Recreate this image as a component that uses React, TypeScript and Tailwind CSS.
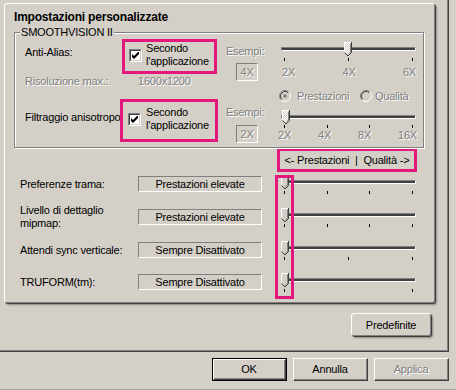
import React from "react";

function Dis({ children, className = "" }: { children: React.ReactNode; className?: string }) {
  return <span className={`text-[#808080] [text-shadow:1px_1px_0_#ffffff] ${className}`}>{children}</span>;
}

function Checkbox() {
  return (
    <div className="w-[13px] h-[13px] flex-none border-t border-l border-[#808080] border-r border-b border-r-white border-b-white">
      <div className="w-full h-full border-t border-l border-[#404040] border-r border-b border-r-[#d4d0c8] border-b-[#d4d0c8] bg-white flex items-center justify-center">
        <svg width="7" height="7" viewBox="0 0 7 7">
          <polygon points="0,2 2,4 7,-1 7,2 2,7 0,5" fill="#000" />
        </svg>
      </div>
    </div>
  );
}

function Radio({ checked }: { checked?: boolean }) {
  return (
    <svg width="12" height="12" viewBox="0 0 12 12" className="flex-none">
      <circle cx="6" cy="6" r="5.5" fill="#d4d0c8" />
      <path d="M2.11 9.89 A5.5 5.5 0 0 1 9.89 2.11" stroke="#808080" fill="none" />
      <path d="M9.89 2.11 A5.5 5.5 0 0 1 2.11 9.89" stroke="#ffffff" fill="none" />
      <path d="M2.82 9.18 A4.5 4.5 0 0 1 9.18 2.82" stroke="#404040" fill="none" />
      {checked && <circle cx="6" cy="6" r="1.8" fill="#808080" />}
    </svg>
  );
}

function Thumb({ hatched }: { hatched?: boolean }) {
  return (
    <svg width="8" height="15" viewBox="0 0 8 15">
      <defs>
        <pattern id="hatchpat" width="2" height="2" patternUnits="userSpaceOnUse">
          <rect width="2" height="2" fill="#d4d0c8" />
          <rect width="1" height="1" fill="#ffffff" />
          <rect x="1" y="1" width="1" height="1" fill="#ffffff" />
        </pattern>
      </defs>
      <path d="M0.5 0.5 H7.5 V10.5 L4 14 L0.5 10.5 Z" fill={hatched ? "url(#hatchpat)" : "#d4d0c8"} />
      <path d="M0.5 10.5 V0.5 H7" stroke="#ffffff" fill="none" />
      <path d="M7.5 0 V10.5 L4 14 L0.5 10.5" stroke="#404040" fill="none" />
      <path d="M6.5 1.5 V10 L4 12.5" stroke="#808080" fill="none" />
    </svg>
  );
}

function Slider({
  thumbLeft = 0,
  ticks,
  hatched = false,
  tickMt = "mt-[1px]",
  children,
}: {
  thumbLeft?: number;
  ticks: number;
  hatched?: boolean;
  tickMt?: string;
  children?: React.ReactNode;
}) {
  return (
    <div className="relative w-[135px] flex-none">
      <div className="h-[15px] pt-[5px]">
        <div className="h-[4px] border-t border-l border-[#808080] border-b border-r border-b-white border-r-white bg-[#404040]" />
      </div>
      <div className={`${tickMt} h-[3px] px-[3px] flex justify-between`}>
        {Array.from({ length: ticks }).map((_, i) => (
          <div key={i} className="w-px h-full bg-black" />
        ))}
      </div>
      {children}
      <div className="absolute top-0" style={{ left: thumbLeft }}>
        <Thumb hatched={hatched} />
      </div>
    </div>
  );
}

function SmallBox({ children }: { children: React.ReactNode }) {
  return (
    <div className="w-[22px] h-[18px] ml-[10px] border-t border-l border-[#808080] border-b border-r border-b-white border-r-white flex items-center justify-center">
      <Dis>{children}</Dis>
    </div>
  );
}

function ValueBox({ children }: { children: React.ReactNode }) {
  return (
    <div className="w-[124px] h-[16px] flex-none border-t border-l border-[#808080] border-b border-r border-b-white border-r-white flex items-center justify-center leading-[14px]">
      {children}
    </div>
  );
}

function ClassicButton({ children, isDefault, disabled }: { children: React.ReactNode; isDefault?: boolean; disabled?: boolean }) {
  const inner = (
    <div className="w-full h-full border-t border-l border-white border-r border-b border-r-[#404040] border-b-[#404040]">
      <div className="w-full h-full border-r border-b border-r-[#808080] border-b-[#808080] flex items-center justify-center">
        {disabled ? <Dis>{children}</Dis> : <span>{children}</span>}
      </div>
    </div>
  );
  return (
    <div className={isDefault ? "w-[75px] h-[23px] border border-black" : "w-[75px] h-[23px]"}>{inner}</div>
  );
}

function LowerRow({ label, value, ticks, twoLine }: { label: React.ReactNode; value: string; ticks: number; twoLine?: boolean }) {
  return (
    <div className="flex items-start h-[20px]">
      <div className="flex items-center h-[16px] mt-[1px]">
        <div className={`w-[124px] pl-[6px] ${twoLine ? "leading-[13px]" : "leading-[14px]"}`}>{label}</div>
        <ValueBox>{value}</ValueBox>
      </div>
      <div className="ml-[19px]">
        <Slider ticks={ticks} />
      </div>
    </div>
  );
}

export default function App() {
  const pink = "border-[3px] border-[#e2187c]";
  return (
    <div className="w-[456px] h-[390px] bg-[#d4d0c8] overflow-hidden font-['Liberation_Sans',Arial,sans-serif] text-[11px] leading-[14px] tracking-[-0.2px] text-black border-b border-[#a9a69f]">
      {/* tab page frame */}
      <div className="w-[449px] h-[352px] border-r border-b border-[#404040] shadow-[inset_-1px_-1px_0_#808080] pt-[3px] pl-[4px] flex flex-col">
        {/* panel */}
        <div className="w-[431px] h-[300px] rounded-[3px] border border-[#808080] border-t-white border-l-white shadow-[1px_1px_0_#404040,2px_2px_2px_#8a8780] pl-[9px] pr-[10px] flex flex-col">
          <div className="mt-[6px] h-[14px] font-bold text-[12px] leading-[14px]">Impostazioni personalizzate</div>

          {/* group box */}
          <div className="relative mt-[8px] h-[116px] border border-[#808080] shadow-[inset_1px_1px_0_#ffffff,1px_1px_0_#ffffff] flex">
            <div className="absolute left-[5px] -top-[8px] px-[1px] bg-[#d4d0c8] leading-[14px]">SMOOTHVISION II</div>

            {/* left column */}
            <div className="w-[205px] flex-none flex flex-col">
              <div className="mt-[6px] flex items-start">
                <div className="w-[107px] pl-[10px] mt-[6px]">Anti-Alias:</div>
                <div className={`w-[95px] h-[35px] ${pink} flex items-center pl-[4px] gap-[4px] pb-[3px]`}>
                  <Checkbox />
                  <div className="leading-[13px]">
                    <div>Secondo</div>
                    <div>l'applicazione</div>
                  </div>
                </div>
              </div>
              <div className="flex h-[14px]">
                <div className="w-[123px] pl-[10px]">
                  <Dis>Risoluzione max.:</Dis>
                </div>
                <Dis>1600x1200</Dis>
              </div>
              <div className="mt-[11px] flex items-start">
                <div className="w-[105px] pl-[10px] mt-[11px] whitespace-nowrap">Filtraggio anisotropo</div>
                <div className={`w-[98px] h-[43px] ${pink} flex items-center pl-[5px] gap-[5px] pb-[3px]`}>
                  <Checkbox />
                  <div className="leading-[13px]">
                    <div>Secondo</div>
                    <div>l'applicazione</div>
                  </div>
                </div>
              </div>
            </div>

            {/* right column */}
            <div className="flex-1 flex flex-col">
              <div className="mt-[9px] flex">
                <div className="w-[61px] pl-[6px] flex flex-col">
                  <div className="mt-[2px] h-[14px]">
                    <Dis>Esempi:</Dis>
                  </div>
                  <div className="mt-[5px]">
                    <SmallBox>4X</SmallBox>
                  </div>
                </div>
                <Slider thumbLeft={63} ticks={3} hatched>
                  <div className="mt-[5px] ml-[1px] w-[134px] h-[13px] leading-[13px] flex justify-between">
                    <Dis>2X</Dis>
                    <Dis>4X</Dis>
                    <Dis>6X</Dis>
                  </div>
                </Slider>
              </div>

              <div className="mt-[9px] h-[12px] pl-[59px] flex items-center">
                <Radio checked />
                <div className="ml-[6px] w-[63px] leading-[12px]">
                  <Dis>Prestazioni</Dis>
                </div>
                <Radio />
                <div className="ml-[3px] leading-[12px]">
                  <Dis>Qualità</Dis>
                </div>
              </div>

              <div className="mt-[3px] flex">
                <div className="w-[61px] pl-[6px] flex flex-col">
                  <div className="h-[14px]">
                    <Dis>Esempi:</Dis>
                  </div>
                  <div className="mt-[6px]">
                    <SmallBox>2X</SmallBox>
                  </div>
                </div>
                <div className="mt-[5px]">
                  <Slider thumbLeft={1} ticks={4} hatched tickMt="mt-0">
                    <div className="mt-[1px] -ml-[3px] w-[139px] h-[13px] leading-[13px] flex justify-between">
                      <Dis>2X</Dis>
                      <Dis>4X</Dis>
                      <Dis>8X</Dis>
                      <Dis>16X</Dis>
                    </div>
                  </Slider>
                </div>
              </div>
            </div>
          </div>

          {/* pink legend */}
          <div className="flex justify-end pr-[7px]">
            <div className={`w-[140px] h-[24px] ${pink} flex items-center justify-center`}>
              &lt;- Prestazioni&nbsp;&nbsp;|&nbsp;&nbsp;Qualità -&gt;
            </div>
          </div>

          {/* lower rows */}
          <div className="relative pt-[3px] flex flex-col">
            <LowerRow label="Preferenze trama:" value="Prestazioni elevate" ticks={4} />
            <div className="mt-[13px]">
              <LowerRow
                twoLine
                label={
                  <>
                    <div>Livello di dettaglio</div>
                    <div>mipmap:</div>
                  </>
                }
                value="Prestazioni elevate"
                ticks={4}
              />
            </div>
            <div className="mt-[13px]">
              <LowerRow label="Attendi sync verticale:" value="Sempre Disattivato" ticks={3} />
            </div>
            <div className="mt-[12px]">
              <LowerRow label="TRUFORM(tm):" value="Sempre Disattivato" ticks={2} />
            </div>
            <div className={`absolute left-[261px] top-[3px] w-[19px] h-[124px] ${pink}`} />
          </div>
        </div>

        <div className="flex justify-end pr-[17px] mt-[10px]">
          <div className="w-[80px] h-[23px] rounded-[3px] border border-[#808080] border-t-white border-l-white shadow-[1px_1px_0_#404040,2px_2px_2px_#8a8780] flex items-center justify-center">
            Predefinite
          </div>
        </div>
      </div>

      {/* dialog buttons */}
      <div className="w-[449px] mt-[6px] flex justify-end gap-[6px]">
        <ClassicButton isDefault>OK</ClassicButton>
        <ClassicButton>Annulla</ClassicButton>
        <ClassicButton disabled>Applica</ClassicButton>
      </div>
    </div>
  );
}
